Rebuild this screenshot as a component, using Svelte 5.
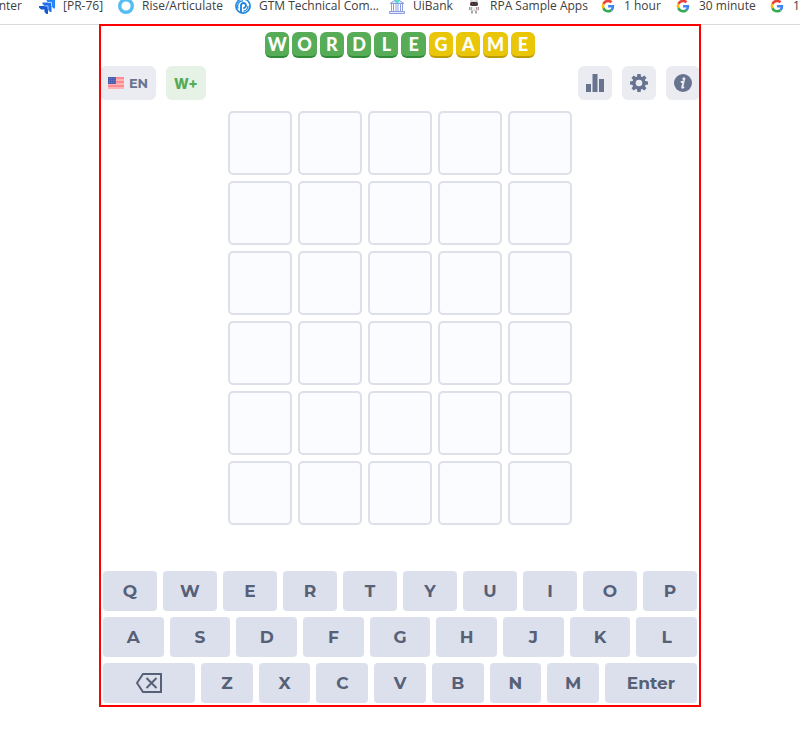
<script>
  const bookmarks = [
    { icon: 'none', label: 'Center', width: 39 },
    { icon: 'jira', label: '[PR-76]', width: 79 },
    { icon: 'ring', label: 'Rise/Articulate', width: 117 },
    { icon: 'target', label: 'GTM Technical Com...', width: 154 },
    { icon: 'bank', label: 'UiBank', width: 77 },
    { icon: 'robot', label: 'RPA Sample Apps', width: 134 },
    { icon: 'google', label: '1 hour', width: 75 },
    { icon: 'google', label: '30 minute', width: 94 },
    { icon: 'google', label: '1 hour', width: 79 }
  ];
  const logo = [...'WORDLEGAME'];
  const cells = Array.from({ length: 30 }, (_, i) => i);
  const rows = [[...'QWERTYUIOP'], [...'ASDFGHJKL'], ['back', ...'ZXCVBNM', 'Enter']];
</script>

<nav class="bookmarks" aria-label="Bookmarks">
  {#each bookmarks as b}
    <a href="#top" class:cut={b.icon === 'none'} style:width="{b.width}px">
      {#if b.icon === 'jira'}
        <svg viewBox="0 0 16 16">
          <path fill="#2684ff" d="M6.500 1H16v9.500h-1.500L12.500 8V4.500H9z" />
          <path fill="#1f6fee" d="M3.500 4.500h9V14h-1.500L9 11.500V8H5.500L3.500 6z" />
          <path fill="#1558d0" d="M0 8h9v8H7.500l-2-2v-2.500H2L0 9.500z" />
          <path stroke="#fff" stroke-width=".6" fill="none" d="M9 4.500h3.500V8M5.500 8H9v3.500" />
        </svg>
      {:else if b.icon === 'ring'}
        <svg viewBox="0 0 16 16"><circle cx="8" cy="8" r="6.300" fill="none" stroke="#55bdf5" stroke-width="3.400" /></svg>
      {:else if b.icon === 'target'}
        <svg viewBox="0 0 16 16" fill="none" stroke="#1e86e0">
          <circle cx="8" cy="8" r="7.100" stroke-width="1.700" />
          <path stroke-width="1.900" d="M6 14V7.500a2.500 2.500 0 1 1 2.300 2.500" />
          <path stroke-width="1.300" d="M3.200 10.500A5 5 0 0 1 8 3M8.500 13A5 5 0 0 0 13 8" />
        </svg>
      {:else if b.icon === 'bank'}
        <svg viewBox="0 0 16 16">
          <path fill="#e5e9fb" stroke="#8c9de2" d="M1 5.500 8 1l7 4.500zM2.500 6v7M4.500 6v7M7 6v7M9 6v7M11.500 6v7M13.500 6v7M.5 13.500h15v2H.5z" />
          <circle cx="8" cy="3" r="2.200" fill="#58dfc6" />
        </svg>
      {:else if b.icon === 'robot'}
        <svg viewBox="0 0 16 16">
          <path fill="#d8d4d8" d="M4 3 5 1l1.500 1.500h3L11 1l1 2v5H4z" />
          <rect x="4" y="4" width="8" height="4" rx="2" fill="#35323a" />
          <path fill="#aaa5ad" d="M4.500 9h7v3.500h-7zM5 13h2v2.500H5zM9 13h2v2.500H9z" />
          <path fill="#eee" d="M6 9h4v3H6z" />
          <path stroke="#b78888" fill="none" d="M3.500 9v3M12.500 9v3" />
          <path fill="#e33" d="M6 5.500h1v1H6zM9 5.500h1v1H9z" />
        </svg>
      {:else if b.icon === 'google'}
        <svg viewBox="0 0 48 48">
          <g transform="translate(5 5) scale(.8)">
            <path fill="#ea4335" d="M24 9.500c3.500 0 6.700 1.200 9.200 3.600l6.900-6.900C35.900 2.400 30.500 0 24 0 14.600 0 6.500 5.400 2.600 13.200l8 6.200C12.400 13.700 17.700 9.500 24 9.500z" />
            <path fill="#4285f4" d="M47 24.600c0-1.600-.2-3.100-.4-4.600H24v9h12.900c-.6 3-2.200 5.500-4.700 7.200l7.700 6C44.400 38 47 32 47 24.600z" />
            <path fill="#fbbc05" d="M10.500 28.600a14.500 14.500 0 0 1 0-9.200l-8-6.200a24 24 0 0 0 0 21.600z" />
            <path fill="#34a853" d="M24 48c6.500 0 11.900-2.100 15.900-5.800l-7.700-6c-2.200 1.500-4.900 2.300-8.200 2.300-6.300 0-11.600-4.200-13.500-9.900l-8 6.200C6.500 42.600 14.600 48 24 48z" />
          </g>
        </svg>
      {/if}
      <span>{b.label}</span>
    </a>
  {/each}
</nav>

<div class="page">
  <main class="game">
    <h1 class="logo" aria-label="Wordle Game">
      {#each logo as letter, i}
        <span class:gold={i > 5}>{letter}</span>
      {/each}
    </h1>

    <div class="toolbar">
      <button class="tool lang">
        <svg width="16" height="12" viewBox="0 0 16 12">
          <path fill="#fdb3b5" d="M0 0h16v12H0z" />
          <path stroke="#fc8c90" stroke-width="2" d="M0 1h16M0 5h16M0 9h16" />
          <path fill="#4b5fae" d="M0 0h8v7H0z" />
          <path stroke="#6a7cc0" stroke-dasharray="1 1" d="M1 1.500h7M1 3.500h7M1 5.500h7" />
        </svg>
        <span>EN</span>
      </button>
      <button class="tool plus">W+</button>
      <div class="spacer"></div>
      <button class="tool" aria-label="Statistics">
        <svg width="18" height="18" viewBox="0 0 18 18"><path d="M0 10h5v8H0zM6.500 0h5v18h-5zM13 5h5v13h-5z" /></svg>
      </button>
      <button class="tool" aria-label="Settings">
        <svg width="18" height="18" viewBox="0 0 18 18">
          {#each [0, 45, 90, 135, 180, 225, 270, 315] as turn}
            <path d="M7 3 7.400 0h3.200L11 3z" transform="rotate({turn} 9 9)" />
          {/each}
          <circle cx="9" cy="9" r="5" fill="none" stroke="#67738f" stroke-width="3.400" />
        </svg>
      </button>
      <button class="tool" aria-label="Information">
        <svg width="18" height="18" viewBox="0 0 18 18">
          <circle cx="9" cy="9" r="9" />
          <circle cx="9.900" cy="4.700" r="1.500" fill="#ebecf2" />
          <path d="M6.800 8.200 9.700 7.400 8.200 13.200c-.2.900.6.700 1.800-.4" fill="none" stroke="#ebecf2" stroke-width="1.900" />
        </svg>
      </button>
    </div>

    <div class="board">
      {#each cells as cell (cell)}
        <div class="cell"></div>
      {/each}
    </div>

    <div class="keyboard">
      {#each rows as row}
        <div class="row">
          {#each row as key}
            {#if key === 'back'}
              <button class="wide" aria-label="Backspace">
                <svg width="26" height="20" viewBox="0 0 26 20" fill="none" stroke="#566077" stroke-width="2">
                  <path d="M7 1h18v18H7L1 10z" />
                  <path d="m10.500 5 10 10m0-10-10 10" />
                </svg>
              </button>
            {:else}
              <button class:wide={key === 'Enter'}>{key}</button>
            {/if}
          {/each}
        </div>
      {/each}
    </div>
  </main>
</div>

<style>
  :global(body) {
    background: #fff;
  }
  .bookmarks {
    display: flex;
    height: 24px;
    overflow: hidden;
    border-bottom: 1px solid #dadada;
    font: 12px/12px 'Segoe UI', 'Open Sans', sans-serif;
  }
  .bookmarks a {
    display: flex;
    flex: none;
    align-items: center;
    gap: 8px;
    height: 12px;
    color: #404040;
    text-decoration: none;
    white-space: nowrap;
  }
  .bookmarks a.cut {
    box-sizing: border-box;
    justify-content: flex-end;
    padding-right: 17px;
  }
  .bookmarks svg {
    flex: none;
    width: 16px;
    height: 16px;
  }
  .page {
    padding-bottom: 24px;
  }
  .game {
    position: relative;
    max-width: 600px;
    margin: 0 auto;
    padding: 7px 0 3px;
    box-sizing: border-box;
    font-family: Montserrat, Inter, sans-serif;
  }
  .game::after {
    content: '';
    position: absolute;
    inset: -1px;
    border: 2px solid #f00;
    pointer-events: none;
  }
  .logo {
    display: flex;
    gap: 3px;
    width: 270px;
    margin: 0 auto 8px;
    font: 900 18px/24px Lato, sans-serif;
    color: #fff;
    text-align: center;
  }
  .logo span {
    flex: 1 1 0;
    height: 24px;
    border-bottom: 2px solid #2f8b35;
    border-radius: 6px;
    background: #57ac57;
  }
  .logo .gold {
    border-color: #bd9c05;
    background: #e9c607;
  }
  button {
    border: 0;
    padding: 0;
    font-family: inherit;
    cursor: pointer;
  }
  .toolbar {
    display: flex;
    gap: 10px;
  }
  .tool {
    display: flex;
    align-items: center;
    justify-content: center;
    width: 34px;
    height: 34px;
    border-radius: 6px;
    background: #ebecf2;
    color: #67738f;
    fill: #67738f;
    font-size: 13px;
    font-weight: 700;
  }
  .lang {
    gap: 5px;
    width: 56px;
  }
  .plus {
    width: 40px;
    background: #e6f2e6;
    color: #55ab55;
    font-family: Inter, sans-serif;
    font-size: 14px;
    font-weight: 800;
  }
  .spacer {
    flex: 1;
  }
  .board {
    display: grid;
    grid-template-columns: repeat(5, 64px);
    gap: 6px;
    justify-content: center;
    margin: 11px 0 46px;
  }
  .cell {
    box-sizing: border-box;
    height: 64px;
    border: 2px solid #dddfe9;
    border-radius: 5px;
    background: #fbfcff;
  }
  .keyboard {
    display: flex;
    flex-direction: column;
    gap: 6px;
    padding: 0 3px;
  }
  .row {
    display: flex;
    gap: 6px;
  }
  .row button {
    display: flex;
    flex: 1 1 0;
    align-items: center;
    justify-content: center;
    height: 40px;
    border-radius: 4px;
    background: #dce0ec;
    color: #566077;
    font-size: 17px;
    font-weight: 700;
  }
  .row .wide {
    flex: 0 0 92px;
  }
</style>
